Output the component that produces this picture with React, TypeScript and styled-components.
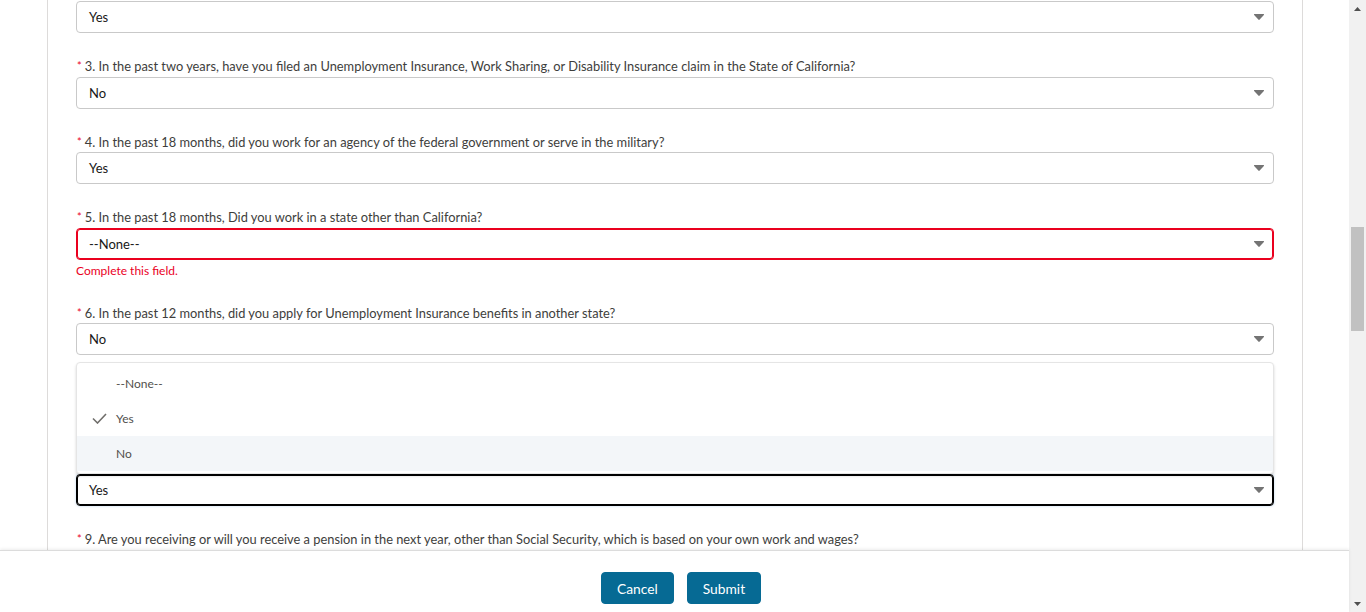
import React from 'react';
import styled, { createGlobalStyle } from 'styled-components';

const GlobalStyle = createGlobalStyle`
  html, body {
    margin: 0;
    padding: 0;
    height: 100%;
    overflow: hidden;
    background: #fff;
  }
  body {
    font-family: Lato, "Open Sans", "Noto Sans", sans-serif;
    color: #181818;
  }
`;

const Page = styled.div`
  display: flex;
  height: 100vh;
  width: 100vw;
`;

const Main = styled.div`
  flex: 1;
  display: flex;
  flex-direction: column;
  min-width: 0;
`;

const Viewport = styled.div`
  flex: 1;
  overflow: hidden;
`;

const Card = styled.div`
  margin: 0 46px 0 47px;
  border-left: 1px solid #dddbda;
  border-right: 1px solid #dddbda;
  padding: 1px 28px 200px;
  display: flex;
  flex-direction: column;
  gap: 24px;
`;

const Item = styled.div`
  display: flex;
  flex-direction: column;
`;

const Label = styled.label`
  display: block;
  height: 19.5px;
  font-size: 12.85px;
  line-height: 19px;
  color: #3e3e3c;
  padding-left: 1px;
  white-space: nowrap;
`;

const Required = styled.abbr`
  display: inline-block;
  line-height: 1;
  color: #ea001e;
  text-decoration: none;
  font-size: 11px;
  margin-right: 3px;
  vertical-align: 1px;
`;

const FieldWrap = styled.div`
  position: relative;
`;

const Field = styled.div<{ $state?: 'error' | 'focus' }>`
  box-sizing: border-box;
  height: 32px;
  display: flex;
  align-items: center;
  justify-content: space-between;
  padding: 0 9px 0 12px;
  border-radius: 4px;
  background: #fff;
  font-size: 13px;
  color: #181818;
  border: 1px solid
    ${p => (p.$state === 'error' ? '#ea001e' : p.$state === 'focus' ? '#000' : '#c9c9c9')};
  box-shadow: ${p =>
    p.$state === 'error'
      ? 'inset 0 0 0 1px #ea001e'
      : p.$state === 'focus'
      ? 'inset 0 0 0 1px #000, 0 0 2px 1px #e3eef8'
      : 'none'};
`;

const Arrow = styled.svg`
  width: 10px;
  height: 6px;
  fill: #747474;
  flex: none;
`;

const ErrorText = styled.div`
  font-size: 12px;
  line-height: 18px;
  color: #ea001e;
  margin-top: 2px;
`;

const Listbox = styled.div`
  position: absolute;
  left: 0;
  right: 0;
  bottom: 100%;
  box-sizing: border-box;
  padding: 3px 0 2px;
  background: #fff;
  border: 1px solid #e5e5e5;
  border-radius: 4px;
  box-shadow: 0 2px 3px rgba(0, 0, 0, 0.16);
  z-index: 5;
`;

const Option = styled.div<{ $active?: boolean }>`
  height: 35px;
  display: flex;
  align-items: center;
  padding-left: 15px;
  font-size: 12px;
  color: #514f4d;
  background: ${p => (p.$active ? '#f3f6f9' : 'transparent')};
`;

const CheckSlot = styled.span`
  width: 24px;
  display: flex;
  align-items: center;
`;

const Footer = styled.div`
  height: 62px;
  flex: none;
  box-sizing: border-box;
  border-top: 1px solid #dcdcdc;
  box-shadow: 0 -1px 3px rgba(0, 0, 0, 0.08);
  background: #fff;
  display: flex;
  justify-content: center;
  gap: 13px;
  padding: 21px 0 0 13px;
  position: relative;
  z-index: 10;
`;

const Button = styled.button`
  height: 32px;
  padding: 0 15px;
  border: 1px solid #066a94;
  background: #066a94;
  color: #fff;
  border-radius: 4px;
  font-family: Lato, "Open Sans", sans-serif;
  font-size: 13.8px;
  cursor: pointer;
`;

const Scrollbar = styled.div`
  width: 17px;
  flex: none;
  background: #f1f1f1;
  display: flex;
  flex-direction: column;
  align-items: center;
`;

const ScrollArrow = styled.div`
  height: 17px;
  display: flex;
  align-items: center;
  justify-content: center;
`;

const Track = styled.div`
  flex: 1;
  display: flex;
  flex-direction: column;
  align-items: center;
  padding-top: 210px;
`;

const Thumb = styled.div`
  width: 13px;
  height: 104px;
  background: #c1c1c1;
`;

const DownArrow = () => (
  <Arrow viewBox="0 0 10 6">
    <path d="M0.6 0h8.8c.5 0 .8.5.5.9L5.4 5.7a.6.6 0 0 1-.8 0L.1.9C-.2.5.1 0 .6 0z" />
  </Arrow>
);

const Select: React.FC<{ value: string; state?: 'error' | 'focus' }> = ({ value, state }) => (
  <Field $state={state}>
    <span>{value}</span>
    <DownArrow />
  </Field>
);

type Q = { label?: string; value: string; error?: boolean; open?: boolean };

const questions: Q[] = [
  { value: 'Yes' },
  {
    label:
      '3. In the past two years, have you filed an Unemployment Insurance, Work Sharing, or Disability Insurance claim in the State of California?',
    value: 'No',
  },
  {
    label: '4. In the past 18 months, did you work for an agency of the federal government or serve in the military?',
    value: 'Yes',
  },
  { label: '5. In the past 18 months, Did you work in a state other than California?', value: '--None--', error: true },
  { label: '6. In the past 12 months, did you apply for Unemployment Insurance benefits in another state?', value: 'No' },
  { label: '7. In the past 12 months, did you receive a severance payment from an employer?', value: 'No' },
  { label: '8. Are you currently attending school or a training program?', value: 'Yes', open: true },
  {
    label:
      '9. Are you receiving or will you receive a pension in the next year, other than Social Security, which is based on your own work and wages?',
    value: '--None--',
  },
];

const options = ['--None--', 'Yes', 'No'];

export default function App() {
  return (
    <>
      <GlobalStyle />
      <Page>
        <Main>
          <Viewport>
            <Card>
              {questions.map((q, i) => (
                <Item key={i}>
                  {q.label && (
                    <Label>
                      <Required title="required">*</Required>
                      {q.label}
                    </Label>
                  )}
                  <FieldWrap>
                    {q.open && (
                      <Listbox role="listbox">
                        {options.map(o => (
                          <Option key={o} $active={o === 'No'}>
                            <CheckSlot>
                              {o === q.value && (
                                <svg width="15" height="11" viewBox="0 0 15 11">
                                  <polyline
                                    points="1,5.5 5.5,10 14,1"
                                    fill="none"
                                    stroke="#706e6b"
                                    strokeWidth="1.6"
                                  />
                                </svg>
                              )}
                            </CheckSlot>
                            {o}
                          </Option>
                        ))}
                      </Listbox>
                    )}
                    <Select value={q.value} state={q.error ? 'error' : q.open ? 'focus' : undefined} />
                  </FieldWrap>
                  {q.error && <ErrorText>Complete this field.</ErrorText>}
                </Item>
              ))}
            </Card>
          </Viewport>
          <Footer>
            <Button>Cancel</Button>
            <Button>Submit</Button>
          </Footer>
        </Main>
        <Scrollbar>
          <ScrollArrow>
            <svg width="7" height="4" viewBox="0 0 7 4">
              <path d="M3.5 0L7 4H0z" fill="#505050" />
            </svg>
          </ScrollArrow>
          <Track>
            <Thumb />
          </Track>
          <ScrollArrow>
            <svg width="7" height="4" viewBox="0 0 7 4">
              <path d="M0 0h7L3.5 4z" fill="#505050" />
            </svg>
          </ScrollArrow>
        </Scrollbar>
      </Page>
    </>
  );
}
